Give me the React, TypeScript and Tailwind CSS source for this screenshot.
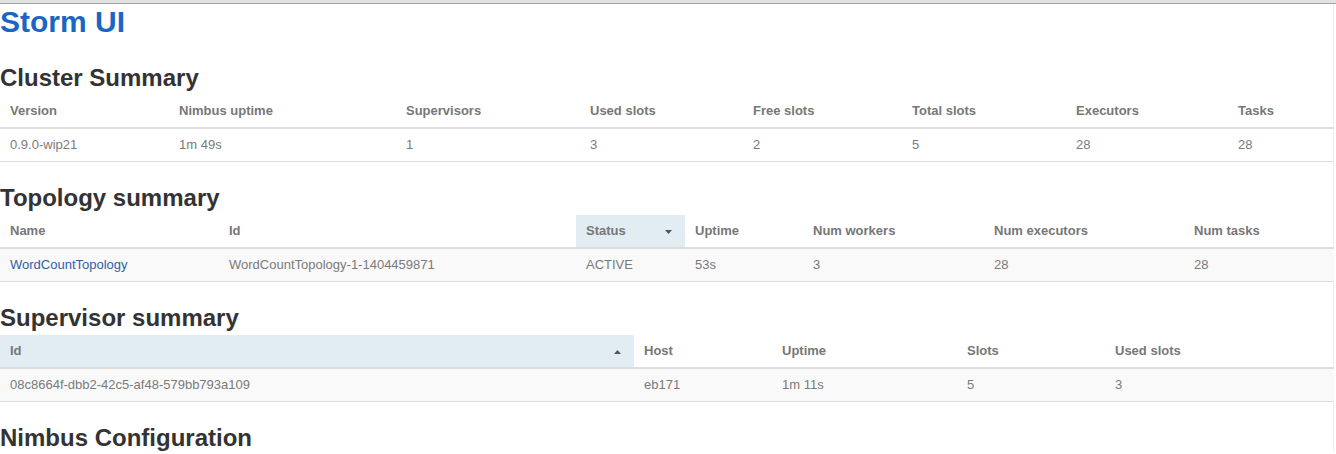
import React from "react";

type Col = { label: string; width: number; sorted?: "asc" | "desc" };
type Cell = { text: string; link?: boolean };

const CLUSTER_COLS: Col[] = [
  { label: "Version", width: 169 },
  { label: "Nimbus uptime", width: 227 },
  { label: "Supervisors", width: 184 },
  { label: "Used slots", width: 163 },
  { label: "Free slots", width: 159 },
  { label: "Total slots", width: 164 },
  { label: "Executors", width: 162 },
  { label: "Tasks", width: 106 },
];

const TOPOLOGY_COLS: Col[] = [
  { label: "Name", width: 219 },
  { label: "Id", width: 357 },
  { label: "Status", width: 109, sorted: "desc" },
  { label: "Uptime", width: 118 },
  { label: "Num workers", width: 181 },
  { label: "Num executors", width: 200 },
  { label: "Num tasks", width: 150 },
];

const SUPERVISOR_COLS: Col[] = [
  { label: "Id", width: 634, sorted: "asc" },
  { label: "Host", width: 138 },
  { label: "Uptime", width: 185 },
  { label: "Slots", width: 148 },
  { label: "Used slots", width: 229 },
];

function SortArrow({ dir }: { dir: "asc" | "desc" }) {
  return (
    <svg width="7" height="4" viewBox="0 0 7 4" className="absolute right-[13px] top-[15px]">
      {dir === "desc" ? (
        <polygon points="0,0 7,0 3.5,4" fill="#555" />
      ) : (
        <polygon points="0,4 7,4 3.5,0" fill="#555" />
      )}
    </svg>
  );
}

function SummaryTable({ cols, rows, striped }: { cols: Col[]; rows: Cell[][]; striped?: boolean }) {
  return (
    <table className="table-fixed border-collapse w-[1334px] text-[13px] leading-[16px]">
      <colgroup>
        {cols.map((c) => (
          <col key={c.label} style={{ width: c.width }} />
        ))}
      </colgroup>
      <thead>
        <tr className="border-b-2 border-[#ddd]">
          {cols.map((c) => (
            <th
              key={c.label}
              className={
                "relative text-left font-bold text-[#777] px-[10px] py-[8px] h-[32px] " +
                (c.sorted ? "bg-[#e1edf3]" : "")
              }
            >
              {c.label}
              {c.sorted && <SortArrow dir={c.sorted} />}
            </th>
          ))}
        </tr>
      </thead>
      <tbody>
        {rows.map((r, i) => (
          <tr key={i} className={"border-b border-[#ddd] " + (striped ? "bg-[#f9f9f9]" : "")}>
            {r.map((cell, j) => (
              <td key={j} className="px-[10px] py-[8px] text-[#7a7a7a]">
                {cell.link ? <a className="text-[#2d62a8]">{cell.text}</a> : cell.text}
              </td>
            ))}
          </tr>
        ))}
      </tbody>
    </table>
  );
}

function Heading({ children }: { children: React.ReactNode }) {
  return (
    <h2 className="text-[24px] leading-[26px] font-bold text-[#333] mt-[23px] mb-[4px]">{children}</h2>
  );
}

const cells = (xs: string[]): Cell[] => xs.map((text) => ({ text }));

export default function App() {
  return (
    <div
      className="w-[1336px] h-[454px] overflow-hidden bg-white"
      style={{ fontFamily: '"Liberation Sans", Arial, Helvetica, sans-serif' }}
    >
      <div className="h-[3px] bg-[#e2e2e2]" />
      <div className="h-[1px] bg-[#a3a3a3]" />
      <div className="w-[1334px] border-r border-[#eee]">
        <h1 className="text-[30px] leading-[36px] font-bold text-[#1a66c4]">Storm UI</h1>

        <h2 className="text-[24px] leading-[26px] font-bold text-[#333] mt-[25px] mb-[4px]">Cluster Summary</h2>
        <SummaryTable
          cols={CLUSTER_COLS}
          rows={[cells(["0.9.0-wip21", "1m 49s", "1", "3", "2", "5", "28", "28"])]}
        />

        <Heading>Topology summary</Heading>
        <SummaryTable
          cols={TOPOLOGY_COLS}
          striped
          rows={[
            [
              { text: "WordCountTopology", link: true },
              ...cells(["WordCountTopology-1-1404459871", "ACTIVE", "53s", "3", "28", "28"]),
            ],
          ]}
        />

        <Heading>Supervisor summary</Heading>
        <SummaryTable
          cols={SUPERVISOR_COLS}
          striped
          rows={[cells(["08c8664f-dbb2-42c5-af48-579bb793a109", "eb171", "1m 11s", "5", "3"])]}
        />

        <Heading>Nimbus Configuration</Heading>
      </div>
    </div>
  );
}
